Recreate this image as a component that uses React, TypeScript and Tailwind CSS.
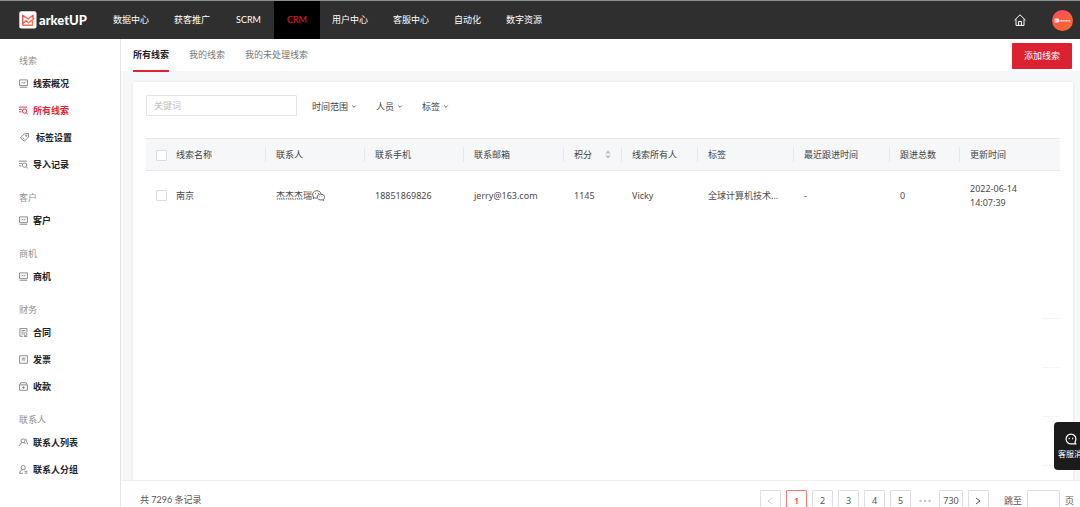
import type { ReactNode } from 'react';

type IconName = 'chart' | 'search' | 'tag' | 'contract' | 'invoice' | 'payment' | 'people' | 'group';

const iconShapes: Record<IconName, ReactNode> = {
  chart: (
    <>
      <path d="M0.7 1.200h10.600v7.600H.7zM1 11h10" />
      <path d="M3 6l1.800-1.800 1.600 1.600L9 3.800" />
    </>
  ),
  search: (
    <>
      <path d="M0 1.500h10.500M0 4.600h3.800M0 7.800h3.200" />
      <circle cx="7.4" cy="6.8" r="2.900" />
      <path d="M9.500 9l2.200 2" />
    </>
  ),
  tag: (
    <>
      <path d="M0.6 6.600L5.600 1.200l5.600-.6.200 4.800-5.600 5.600z" />
      <circle cx="8.400" cy="3.600" r="0.900" />
      <path d="M3.600 6.200l2.400 2.200" />
    </>
  ),
  contract: (
    <>
      <path d="M10.600 5.500V0.800H1.200v10.200h4M3.300 3.400h5.200M3.300 5.600h3M3.300 7.800h2" />
      <circle cx="8.600" cy="8.200" r="2" />
      <path d="M6.600 11.200h4.600" />
    </>
  ),
  invoice: <path d="M0.8 1h10.400v10H.8zM3.600 4.400h4.800M3.600 6.600h4.800" />,
  payment: (
    <>
      <path d="M0.8 3.800h10.400v7.200H.8zM1 3.600L2.400 1h7.200L11 3.600" />
      <path d="M4.200 7.300h3.600M6 5.600v3.400" />
    </>
  ),
  people: (
    <>
      <circle cx="5.400" cy="3.800" r="2.600" />
      <path d="M0.8 10.800c.2-2.400 1.400-3.800 3-4.400M7 6.400c1 .3 1.800 1 2.200 1.800M8.400 1.200c1.800.4 2.400 2.200 1.600 3.600 1 .8 1.400 2.400 1.400 3.600" />
    </>
  ),
  group: (
    <>
      <circle cx="5.600" cy="3.600" r="2.800" />
      <path d="M0.8 11c.2-2.600 1.600-4.400 4-4.600M0.8 11h4.400M7.400 8.400h4M7.400 10.800h4" />
    </>
  ),
};

function MenuIcon({ name }: { name: IconName }) {
  return (
    <svg viewBox="0 0 12 12" className="size-[9px] shrink-0" fill="none" stroke="currentColor" strokeWidth="1.200" aria-hidden="true">
      {iconShapes[name]}
    </svg>
  );
}

const navItems = ['数据中心', '获客推广', 'SCRM', 'CRM', '用户中心', '客服中心', '自动化', '数字资源'];

const menu: { title: string; items: { label: string; icon: IconName; active?: boolean }[] }[] = [
  {
    title: '线索',
    items: [
      { label: '线索概况', icon: 'chart' },
      { label: '所有线索', icon: 'search', active: true },
      { label: '标签设置', icon: 'tag' },
      { label: '导入记录', icon: 'search' },
    ],
  },
  { title: '客户', items: [{ label: '客户', icon: 'chart' }] },
  { title: '商机', items: [{ label: '商机', icon: 'chart' }] },
  {
    title: '财务',
    items: [
      { label: '合同', icon: 'contract' },
      { label: '发票', icon: 'invoice' },
      { label: '收款', icon: 'payment' },
    ],
  },
  {
    title: '联系人',
    items: [
      { label: '联系人列表', icon: 'people' },
      { label: '联系人分组', icon: 'group' },
    ],
  },
];

const columns = ['线索名称', '联系人', '联系手机', '联系邮箱', '积分', '线索所有人', '标签', '最近跟进时间', '跟进总数', '更新时间'];

function Logo() {
  return (
    <a href="#" className="flex w-[82px] shrink-0 items-center gap-[2px] text-white" aria-label="MarketUP">
      <svg viewBox="0 0 18 18" className="size-[18px] shrink-0" aria-hidden="true">
        <defs>
          <linearGradient id="mark" x1="0" y1="0" x2="1" y2="1">
            <stop offset="0" stopColor="#f04a5e" />
            <stop offset="1" stopColor="#ff7a3c" />
          </linearGradient>
        </defs>
        <rect x="0.3" y="0.3" width="17.200" height="17.200" rx="2" fill="#fff" />
        <path
          d="M3.700 14.200V4.200L9 8l5-3.800v4M3.700 14.200h9.800v-4.400M4 12.400l3-2.600 2.400 2 6-4.600"
          fill="none"
          stroke="url(#mark)"
          strokeWidth="1.400"
          strokeLinejoin="round"
        />
      </svg>
      <span className="font-['Lato','Liberation_Sans',sans-serif] text-[13px] leading-none font-black">arketUP</span>
    </a>
  );
}

function TopBar() {
  return (
    <header className="flex h-[39px] shrink-0 items-center border-t border-[#8b908f] bg-[#2f2f2f] pr-[7px] pl-[19px] text-white">
      <Logo />
      <nav className="flex h-full">
        {navItems.map((item) => (
          <a
            key={item}
            href="#"
            className={
              item === 'CRM'
                ? "flex items-center bg-black px-[13px] font-['Lato','Liberation_Sans',sans-serif] text-[#e0202e]"
                : item === 'SCRM'
                  ? "flex items-center px-[13px] font-['Lato','Liberation_Sans',sans-serif]"
                  : 'flex items-center pr-[13px] pl-3'
            }
          >
            {item}
          </a>
        ))}
      </nav>
      <div className="ml-auto flex items-center gap-[26px]">
        <button type="button" aria-label="首页">
          <svg viewBox="0 0 12 12" className="size-3" fill="none" stroke="#fff" strokeWidth="1" aria-hidden="true">
            <path d="M0.5 6.200L6 0.800l5.500 5.400M2 5.200v6.200h8V5.200M4.600 11.200V7.400h2.800v3.800" />
          </svg>
        </button>
        <button type="button" aria-label="账户">
          <svg viewBox="0 0 21 21" className="size-[21px]" aria-hidden="true">
            <defs>
              <linearGradient id="avatar" x1="0.2" y1="0" x2="0.8" y2="1">
                <stop offset="0" stopColor="#fb4c5c" />
                <stop offset="1" stopColor="#ff6a28" />
              </linearGradient>
            </defs>
            <circle cx="10.500" cy="10.500" r="10.500" fill="url(#avatar)" />
            <rect x="2.600" y="8.600" width="4.200" height="4" rx="0.600" fill="#fff" />
            <path d="M3.600 12V9.800l1.200 1 1.200-1" fill="none" stroke="#fb5a50" strokeWidth="0.500" />
            <path d="M7.400 10.700h11" stroke="#ffe1dc" strokeWidth="1.400" strokeDasharray="1.300 0.300" />
          </svg>
        </button>
      </div>
    </header>
  );
}

function Sidebar() {
  return (
    <aside className="w-[121px] shrink-0 overflow-hidden border-r border-[#e6e6e8] bg-white pt-[2px] pl-[19px]">
      {menu.map((group) => (
        <section key={group.title}>
          <h2 className="mt-[10px] h-[19px] leading-[19px] text-[#8f8f8f]">{group.title}</h2>
          <ul>
            {group.items.map((item) => (
              <li key={item.label}>
                <a
                  href="#"
                  className={
                    item.active
                      ? 'flex h-[27px] items-center gap-[5px] font-bold text-[#dc2433]'
                      : 'flex h-[27px] items-center gap-[5px] font-bold text-[#222]'
                  }
                >
                  <span className={item.active ? 'text-[#dc2433]' : item.icon === 'tag' ? 'pr-[2px] pl-[1px] text-[#808080]' : 'text-[#808080]'}>
                    <MenuIcon name={item.icon} />
                  </span>
                  {item.label}
                </a>
              </li>
            ))}
          </ul>
        </section>
      ))}
    </aside>
  );
}

function Tabs() {
  return (
    <div className="flex h-8 shrink-0 items-center justify-between bg-white pr-2 pl-3">
      <div className="flex h-full gap-5 text-[#777]" role="tablist">
        <button type="button" role="tab" aria-selected="true" className="h-[33px] border-b-2 border-[#dc2433] font-bold text-[#222]">
          所有线索
        </button>
        <button type="button" role="tab" aria-selected="false">我的线索</button>
        <button type="button" role="tab" aria-selected="false">我的未处理线索</button>
      </div>
      <button type="button" className="mt-[2px] h-[26px] rounded-[1px] bg-[#dc2230] px-3 text-white">
        添加线索
      </button>
    </div>
  );
}

function Filters() {
  return (
    <div className="flex items-center">
      <input
        type="text"
        aria-label="关键词"
        placeholder="关键词"
        className="h-[21px] w-[151px] rounded-[1px] border border-[#e4e5e8] px-[7px] outline-none placeholder:text-[#bfbfbf]"
      />
      <div className="flex gap-[19px] pt-[3px] pl-[15px] text-[#444]">
        {['时间范围', '人员', '标签'].map((label) => (
          <button key={label} type="button" className="flex items-center gap-[3px]">
            {label}
            <svg viewBox="0 0 6 6" className="size-[6px]" fill="none" stroke="#666" strokeWidth="1" aria-hidden="true">
              <path d="M1.200 1.500l1.800 1.800 1.800-1.800" />
            </svg>
          </button>
        ))}
      </div>
    </div>
  );
}

function Check({ label }: { label: string }) {
  return (
    <input
      type="checkbox"
      aria-label={label}
      className="block size-[11px] appearance-none rounded-[1px] border border-[#dcdde0] bg-white checked:bg-[#dc2433]"
    />
  );
}

function LeadsTable() {
  return (
    <table className="mt-[22px] w-full table-fixed border-collapse text-left text-[#4a4a4a]">
      <colgroup>
        <col className="w-[20px]" />
        <col className="w-[100px]" />
        <col className="w-[99px]" />
        <col className="w-[99px]" />
        <col className="w-[100px]" />
        <col className="w-[58px]" />
        <col className="w-[76px]" />
        <col className="w-[96px]" />
        <col className="w-[96px]" />
        <col className="w-[70px]" />
        <col className="w-[100px]" />
      </colgroup>
      <thead>
        <tr className="h-8 border-y border-[#e6e8eb] bg-[#f6f7f9]">
          <th className="pt-[2px] pl-[10px]">
            <Check label="全选" />
          </th>
          {columns.map((name, i) => (
            <th key={name} className="p-0 font-normal text-[#444]">
              <div
                className={
                  i === columns.length - 1
                    ? 'flex h-[15px] items-center pl-[10px]'
                    : 'flex h-[15px] items-center justify-between border-r border-[#e6e8eb] pr-[10px] pl-[10px]'
                }
              >
                <span className="whitespace-nowrap">{name}</span>
                {name === '积分' && (
                  <svg viewBox="0 0 6 9" className="h-[9px] w-[6px] shrink-0" fill="#bfbfbf" aria-hidden="true">
                    <path d="M3 0.400l2.800 3H0.200zM3 8.600l2.800-3H0.200z" />
                  </svg>
                )}
              </div>
            </th>
          ))}
        </tr>
      </thead>
      <tbody>
        <tr className="h-[50px] [&>td]:pl-[10px]">
          <td>
            <Check label="选择南京" />
          </td>
          <td>南京</td>
          <td>
            <span className="flex items-center">
              杰杰杰瑞
              <svg viewBox="0 0 13 11" className="h-[11px] w-[13px] shrink-0" fill="none" stroke="#555" strokeWidth="0.900" aria-hidden="true">
                <path d="M5 8.200c-.9.100-1.600-.1-2.200-.4l-1.600.7.4-1.500C-.8 4.400 1.400.800 4.800.800c2.200 0 4 1.300 4.200 3.200" />
                <path d="M8.600 4.200c4 0 5.200 3.400 2.800 5.100l.3 1.200-1.500-.7c-2.700.6-5-.8-5-2.800 0-1.600 1.500-2.800 3.400-2.800z" />
                <path d="M3.200 3.600h.8M6 3.600h.8M7.300 6.700h.6M9.700 6.700h.6" />
              </svg>
            </span>
          </td>
          <td>18851869826</td>
          <td>jerry@163.com</td>
          <td>1145</td>
          <td>Vicky</td>
          <td className="whitespace-nowrap">全球计算机技术...</td>
          <td>-</td>
          <td>0</td>
          <td className="pr-8">2022-06-14 14:07:39</td>
        </tr>
      </tbody>
    </table>
  );
}

const pageButton = 'flex h-[21px] w-[21px] items-center justify-center rounded-[1px] border border-[#dedede]';

function Pager() {
  return (
    <footer className="flex h-[27px] shrink-0 items-start justify-between overflow-hidden border-t border-[#eceef0] bg-white pt-[9px] pr-[6px] pl-[19px] text-[#555]">
      <span className="font-['Lato','Noto_Sans_CJK_SC',sans-serif] leading-[19px]">共 7296 条记录</span>
      <nav className="flex items-center gap-[5px]" aria-label="分页">
        <button type="button" disabled aria-label="上一页" className={pageButton + ' text-[#ccc]'}>
          <svg viewBox="0 0 8 8" className="size-2" fill="none" stroke="currentColor" aria-hidden="true">
            <path d="M6 1L2 4l4 3" />
          </svg>
        </button>
        <button type="button" aria-current="page" className="flex h-[21px] w-[21px] items-center justify-center rounded-[1px] border border-[#ff7875] font-semibold text-[#f5443f]">
          1
        </button>
        {['2', '3', '4', '5'].map((n) => (
          <button key={n} type="button" className={pageButton}>{n}</button>
        ))}
        <span className="flex w-[18px] justify-center">
          <svg viewBox="0 0 12 4" className="h-1 w-3" fill="#c4c4c4" aria-hidden="true">
            <circle cx="1.500" cy="2" r="1.200" />
            <circle cx="6" cy="2" r="1.200" />
            <circle cx="10.500" cy="2" r="1.200" />
          </svg>
        </span>
        <button type="button" className="flex h-[21px] w-6 items-center justify-center rounded-[1px] border border-[#dedede]">730</button>
        <button type="button" aria-label="下一页" className={pageButton}>
          <svg viewBox="0 0 8 8" className="size-2" fill="none" stroke="currentColor" aria-hidden="true">
            <path d="M2 1l4 3-4 3" />
          </svg>
        </button>
        <label className="flex items-center gap-[5px] pl-[10px]">
          跳至
          <input type="text" className="h-[21px] w-[33px] rounded-[1px] border border-[#dedede] outline-none" />
          页
        </label>
      </nav>
    </footer>
  );
}

export default function App() {
  return (
    <div className="relative flex h-screen flex-col overflow-hidden bg-white font-['Noto_Sans','Noto_Sans_CJK_SC',sans-serif] text-[9px] leading-[14px]">
      <TopBar />
      <div className="flex min-h-0 flex-1">
        <Sidebar />
        <main className="flex min-w-0 flex-1 flex-col bg-[#f6f7f9]">
          <Tabs />
          <div className="min-h-0 flex-1 overflow-hidden pt-[11px] pr-[7px] pl-3">
            <div className="h-full bg-white px-[13px] pt-[13px] shadow-[0_0_3px_rgba(0,0,0,0.08)]">
              <Filters />
              <LeadsTable />
              <div className="flex flex-col items-end pt-[49px]">
                {[1, 2, 3, 4].map((n) => (
                  <div key={n} className="h-[49px] w-[18px] border-b border-[#f4f5f6]" />
                ))}
              </div>
            </div>
          </div>
          <Pager />
        </main>
      </div>
      <button
        type="button"
        className="absolute -right-[14px] bottom-[37px] flex h-12 w-10 flex-col items-start justify-center gap-1 rounded-[4px] bg-[#1b1b1b] px-1 text-[8px] leading-[10px] whitespace-nowrap text-white"
      >
        <svg viewBox="0 0 12 12" className="ml-[7px] size-3" fill="none" stroke="#fff" strokeWidth="1.200" aria-hidden="true">
          <path d="M10.800 10.900H6A4.900 4.900 0 1 1 10.900 6c0 1.300-.4 2.300-1 3.100z" />
          <path d="M4.200 4.800v1.500M7.600 4.800v1.500" />
        </svg>
        客服消息
      </button>
    </div>
  );
}
